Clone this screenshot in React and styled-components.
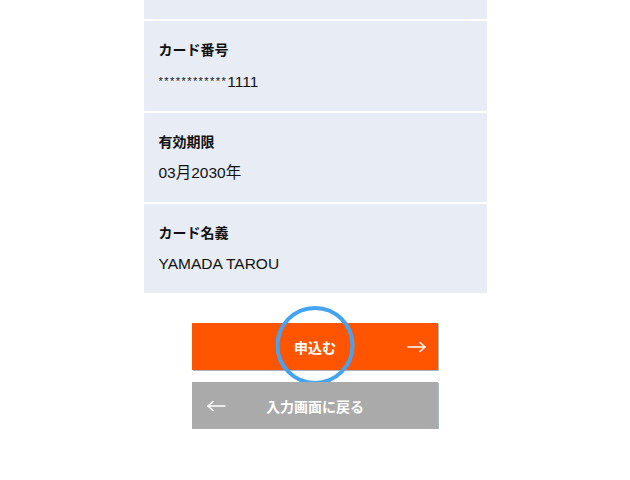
import React from "react";
import styled, { createGlobalStyle } from "styled-components";

const Global = createGlobalStyle`
  html, body { margin: 0; padding: 0; background: #fff; }
  body { font-family: "Liberation Sans", "Noto Sans CJK JP", sans-serif; color: #111; }
`;

const Page = styled.div`
  display: flex;
  flex-direction: column;
  align-items: center;
  width: 630px;
`;

const Panel = styled.div`
  width: 343px;
  background: #e8ecf5;
  display: flex;
  flex-direction: column;
`;

const TopStub = styled.div`
  height: 19px;
`;

const Section = styled.div`
  border-top: 2px solid #fff;
  padding: 18px 15px 19px;
  display: flex;
  flex-direction: column;
  gap: 12px;
`;

const Label = styled.div`
  font-family: "Noto Sans CJK JP", sans-serif;
  font-weight: 700;
  font-size: 14px;
  line-height: 20px;
  color: #111;
`;

const Value = styled.div`
  font-family: "Liberation Sans", "Noto Sans CJK JP", sans-serif;
  font-size: 15.5px;
  line-height: 20px;
  color: #111;
`;

const Stars = styled.span`
  font-size: 11px;
  letter-spacing: 1.45px;
  vertical-align: 2px;
`;

const Buttons = styled.div`
  margin-top: 30px;
  display: flex;
  flex-direction: column;
  gap: 12px;
`;

const Button = styled.div`
  position: relative;
  width: 246px;
  height: 47px;
  box-sizing: border-box;
  background: ${(p) => p.$bg};
  box-shadow: 1px 1px 0 #a9b6c4;
  display: flex;
  align-items: center;
  justify-content: center;
  color: #fff;
  font-family: "Noto Sans CJK JP", sans-serif;
  font-weight: 700;
  font-size: 14px;
`;

const ArrowBox = styled.span`
  position: absolute;
  top: 50%;
  transform: translateY(-50%);
  ${(p) => (p.$side === "right" ? "right: 12px;" : "left: 15px;")}
  display: flex;
`;

const Ring = styled.div`
  position: absolute;
  left: 50%;
  top: 50%;
  width: 79px;
  height: 79px;
  box-sizing: border-box;
  border: 4px solid #45a3f1;
  border-radius: 50%;
  transform: translate(-50%, -52%);
  pointer-events: none;
`;

function Arrow({ side }) {
  const right = side === "right";
  return (
    <ArrowBox $side={side}>
      <svg width="19" height="12" viewBox="0 0 19 12" fill="none" stroke="#fff" strokeWidth="1.5" strokeLinecap="round" strokeLinejoin="round">
        {right ? (
          <>
            <path d="M1 6H18" />
            <path d="M13 1.5L18 6L13 10.5" />
          </>
        ) : (
          <>
            <path d="M18 6H1" />
            <path d="M6 1.5L1 6L6 10.5" />
          </>
        )}
      </svg>
    </ArrowBox>
  );
}

export default function App() {
  return (
    <Page>
      <Global />
      <Panel>
        <TopStub />
        <Section>
          <Label>カード番号</Label>
          <Value>
            <Stars>************</Stars>1111
          </Value>
        </Section>
        <Section>
          <Label>有効期限</Label>
          <Value>03月2030年</Value>
        </Section>
        <Section>
          <Label>カード名義</Label>
          <Value>YAMADA TAROU</Value>
        </Section>
      </Panel>
      <Buttons>
        <Button $bg="#ff5500">
          申込む
          <Arrow side="right" />
          <Ring />
        </Button>
        <Button $bg="#aaaaaa">
          <Arrow side="left" />
          入力画面に戻る
        </Button>
      </Buttons>
    </Page>
  );
}
